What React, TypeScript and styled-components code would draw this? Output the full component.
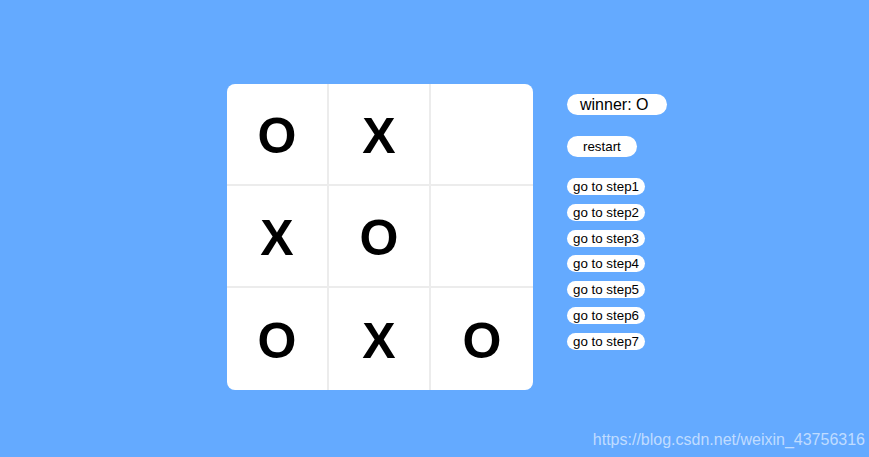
import styled, { createGlobalStyle } from 'styled-components';

const GlobalStyle = createGlobalStyle`
  html, body {
    margin: 0;
    padding: 0;
    height: 100%;
    background: #64aaff;
    font-family: "Liberation Sans", Arial, sans-serif;
  }
`;

const Page = styled.div`
  position: relative;
  width: 869px;
  height: 457px;
  box-sizing: border-box;
  padding: 84px 0 0 227px;
  display: flex;
  align-items: flex-start;
  gap: 34px;
`;

const Board = styled.div`
  width: 306px;
  height: 306px;
  background: #fff;
  border-radius: 8px;
  overflow: hidden;
  display: grid;
  grid-template-columns: 102px 102px 102px;
  grid-template-rows: 102px 102px 102px;
`;

const Cell = styled.div<{ $right: boolean; $bottom: boolean }>`
  display: flex;
  align-items: center;
  justify-content: center;
  box-sizing: border-box;
  font-size: 50px;
  font-weight: bold;
  color: #000;
  border-right: ${(p) => (p.$right ? '2px solid #ececec' : 'none')};
  border-bottom: ${(p) => (p.$bottom ? '2px solid #ececec' : 'none')};
  padding-top: 4px;
`;

const Panel = styled.div`
  display: flex;
  flex-direction: column;
  align-items: flex-start;
  padding-top: 10px;
`;

const Winner = styled.div`
  background: #fff;
  border-radius: 11px;
  height: 21px;
  line-height: 21px;
  padding: 0 19px 0 13px;
  font-size: 16px;
  color: #000;
`;

const Restart = styled.button`
  margin-top: 21px;
  background: #fff;
  border: none;
  border-radius: 11px;
  height: 21px;
  padding: 0 16px;
  font-family: "Liberation Sans", Arial, sans-serif;
  font-size: 13.33px;
  color: #000;
`;

const Steps = styled.div`
  margin-top: 21px;
  display: flex;
  flex-direction: column;
  align-items: flex-start;
  gap: 8.8px;
`;

const StepButton = styled.button`
  display: block;
  background: #fff;
  border: none;
  border-radius: 9px;
  height: 17px;
  padding: 0 6px;
  font-family: "Liberation Sans", Arial, sans-serif;
  font-size: 13.33px;
  line-height: 17px;
  color: #000;
`;

const Watermark = styled.div`
  position: absolute;
  right: 4px;
  bottom: 8px;
  font-size: 16px;
  color: rgba(255, 255, 255, 0.6);
`;

const squares = ['O', 'X', '', 'X', 'O', '', 'O', 'X', 'O'];

export default function App() {
  return (
    <>
      <GlobalStyle />
      <Page>
        <Board>
          {squares.map((v, i) => (
            <Cell key={i} $right={i % 3 !== 2} $bottom={i < 6}>
              {v}
            </Cell>
          ))}
        </Board>
        <Panel>
          <Winner>winner: O</Winner>
          <Restart>restart</Restart>
          <Steps>
            {[1, 2, 3, 4, 5, 6, 7].map((n) => (
              <StepButton key={n}>go to step{n}</StepButton>
            ))}
          </Steps>
        </Panel>
        <Watermark>https://blog.csdn.net/weixin_43756316</Watermark>
      </Page>
    </>
  );
}
